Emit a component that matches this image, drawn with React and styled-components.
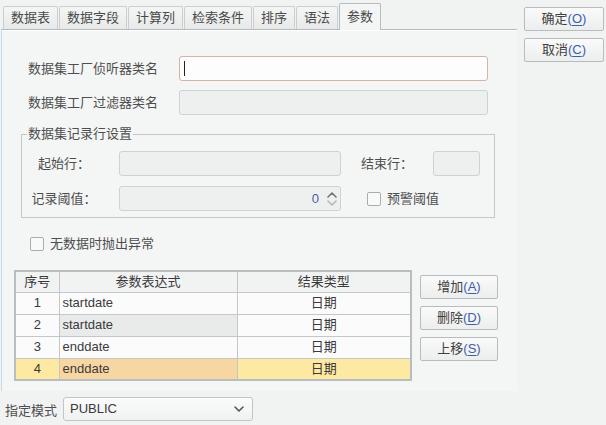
import React from 'react';
import styled, { createGlobalStyle } from 'styled-components';

const GlobalStyle = createGlobalStyle`
  html, body {
    margin: 0;
    padding: 0;
    background: #f1f2f2;
  }
  body {
    font-family: "Liberation Sans", "Noto Sans CJK SC", sans-serif;
    font-size: 13px;
    color: #4e4e4e;
  }
  * {
    box-sizing: border-box;
  }
`;

const Window = styled.div`
  display: flex;
  width: 606px;
  height: 425px;
  overflow: hidden;
`;

const Main = styled.div`
  width: 517px;
  display: flex;
  flex-direction: column;
`;

const TabBar = styled.div`
  display: flex;
  align-items: flex-end;
  height: 29px;
  padding-left: 3px;
`;

const Tab = styled.div`
  position: relative;
  z-index: ${(p) => (p.$active ? 1 : 0)};
  height: ${(p) => (p.$active ? '27px' : '23px')};
  margin-right: 1px;
  margin-bottom: ${(p) => (p.$active ? '-1px' : '0')};
  padding: 0 7px;
  display: flex;
  align-items: center;
  border: 1px solid ${(p) => (p.$active ? '#b9bcbe' : '#cbcecf')};
  border-bottom: none;
  border-radius: 2px 2px 0 0;
  background: ${(p) => (p.$active ? '#f4f5f5' : 'linear-gradient(#f4f5f5, #e8eaea)')};
  line-height: 16px;
  color: #4a4a4a;
`;

const Panel = styled.div`
  margin-left: 1px;
  height: 362px;
  border-top: 1px solid #b6b9bb;
  border-left: 1px solid #c3dbef;
  box-shadow: inset 0 1px 0 #ffffff;
  background: #f4f5f5;
  display: flex;
  flex-direction: column;
`;

const FieldRow = styled.div`
  display: flex;
  align-items: center;
  height: 25px;
  padding-left: 26px;
  margin-top: ${(p) => p.$top}px;
`;

const FieldLabel = styled.span`
  width: 151px;
  line-height: 16px;
`;

const TextBox = styled.div`
  width: ${(p) => p.$w}px;
  height: 25px;
  border: 1px solid ${(p) => (p.$focus ? '#d6b3a4' : '#cfd2d3')};
  border-radius: 3px;
  background: ${(p) => (p.$focus ? '#fdfdfd' : '#eef0f0')};
  display: flex;
  align-items: center;
  padding: 0 4px;
`;

const Caret = styled.span`
  width: 1px;
  height: 15px;
  background: #222;
`;

const Group = styled.fieldset`
  margin: 11px 0 0 19px;
  width: 474px;
  padding: 9px 0 6px 0;
  border: 1px solid #c4c7c9;
  border-radius: 0;
`;

const Legend = styled.legend`
  margin-left: 5px;
  padding: 0 1px;
  line-height: 16px;
`;

const GroupRow = styled.div`
  display: flex;
  align-items: center;
  height: 25px;
  margin-top: ${(p) => p.$top || 0}px;
`;

const CellLabel = styled.span`
  width: ${(p) => p.$w}px;
  margin-left: ${(p) => p.$ml || 0}px;
  margin-right: ${(p) => p.$mr || 0}px;
  text-align: ${(p) => p.$align || 'left'};
  line-height: 16px;
`;

const Spinner = styled(TextBox)`
  justify-content: flex-end;
  padding-right: 3px;
`;

const SpinValue = styled.span`
  color: #4a5ea6;
  margin-right: 8px;
  line-height: 16px;
`;

const SpinArrows = styled.div`
  display: flex;
  flex-direction: column;
  gap: 2px;
`;

const CheckBox = styled.span`
  width: 14px;
  height: 14px;
  border: 1px solid #a9adb0;
  border-radius: 2px;
  background: #f8f9f9;
  flex: none;
`;

const CheckItem = styled.label`
  display: flex;
  align-items: center;
  gap: 6px;
  margin-left: ${(p) => p.$ml || 0}px;
  line-height: 16px;
`;

const CheckRow = styled.div`
  margin-top: 19px;
  padding-left: 28px;
  height: 14px;
  display: flex;
  align-items: center;
`;

const TableArea = styled.div`
  display: flex;
  margin-top: 19px;
  padding-left: 12px;
`;

const Grid = styled.table`
  width: 396px;
  border-collapse: collapse;
  border: 2px solid #b9bdc0;
  table-layout: fixed;
  color: #3a3a3a;
`;

const HeadCell = styled.th`
  height: 21px;
  padding: 0;
  font-weight: normal;
  background: #f1f2f2;
  border: 1px solid #c3c7c9;
  line-height: 16px;
`;

const Cell = styled.td`
  height: 22px;
  padding: 0;
  padding-left: ${(p) => (p.$align === 'left' ? '3px' : '0')};
  text-align: ${(p) => p.$align || 'center'};
  background: ${(p) => p.$bg || '#fbfbfb'};
  border: 1px solid #c3c7c9;
  line-height: 16px;
`;

const SideButtons = styled.div`
  display: flex;
  flex-direction: column;
  gap: 7px;
  margin-left: 8px;
  padding-top: 5px;
`;

const Button = styled.button`
  width: ${(p) => p.$w}px;
  height: 24px;
  padding: 0;
  border: 1px solid #b9bcbe;
  border-radius: 2px;
  background: linear-gradient(#fafafa, #eceded);
  font-family: inherit;
  font-size: 13px;
  color: #404040;
  line-height: 16px;
`;

const Key = styled.span`
  color: #3d5ea8;
  u {
    text-underline-offset: 2px;
  }
`;

const ModeRow = styled.div`
  display: flex;
  align-items: center;
  margin-top: 6px;
  padding-left: 5px;
  gap: 6px;
`;

const Select = styled.div`
  width: 190px;
  height: 24px;
  border: 1px solid #c2c5c7;
  border-radius: 3px;
  background: linear-gradient(#fbfbfb, #f0f1f1);
  display: flex;
  align-items: center;
  justify-content: space-between;
  padding: 0 8px 0 6px;
  color: #3a3a3a;
  line-height: 16px;
`;

const Side = styled.div`
  display: flex;
  flex-direction: column;
  gap: 7px;
  margin-left: 7px;
  padding-top: 7px;
`;

const Chevron = ({ down, color = '#6f7376' }) => (
  <svg width="10" height="6" viewBox="0 0 10 6">
    <path
      d={down ? 'M1 1 L5 5 L9 1' : 'M1 5 L5 1 L9 5'}
      fill="none"
      stroke={color}
      strokeWidth="1.6"
      strokeLinecap="round"
      strokeLinejoin="round"
    />
  </svg>
);

const Mnemonic = ({ text, k }) => (
  <>
    {text}
    <Key>
      (<u>{k}</u>)
    </Key>
  </>
);

const tabs = ['数据表', '数据字段', '计算列', '检索条件', '排序', '语法', '参数'];

const rows = [
  { no: 1, expr: 'startdate', type: '日期' },
  { no: 2, expr: 'startdate', type: '日期', hover: true },
  { no: 3, expr: 'enddate', type: '日期' },
  { no: 4, expr: 'enddate', type: '日期', selected: true },
];

const App = () => {
  return (
    <>
      <GlobalStyle />
      <Window>
        <Main>
          <TabBar>
            {tabs.map((t) => (
              <Tab key={t} $active={t === '参数'}>
                {t}
              </Tab>
            ))}
          </TabBar>
          <Panel>
            <FieldRow $top={26}>
              <FieldLabel>数据集工厂侦听器类名</FieldLabel>
              <TextBox $w={309} $focus>
                <Caret />
              </TextBox>
            </FieldRow>
            <FieldRow $top={9}>
              <FieldLabel>数据集工厂过滤器类名</FieldLabel>
              <TextBox $w={309} />
            </FieldRow>

            <Group>
              <Legend>数据集记录行设置</Legend>
              <GroupRow>
                <CellLabel $w={84} $mr={13} $align="center">起始行：</CellLabel>
                <TextBox $w={222} />
                <CellLabel $w={72} $ml={20}>结束行：</CellLabel>
                <TextBox $w={47} />
              </GroupRow>
              <GroupRow $top={10}>
                <CellLabel $w={84} $mr={13} $align="center">记录阈值：</CellLabel>
                <Spinner $w={222}>
                  <SpinValue>0</SpinValue>
                  <SpinArrows>
                    <Chevron color="#707477" />
                    <Chevron down color="#b4b8ba" />
                  </SpinArrows>
                </Spinner>
                <CheckItem $ml={26}>
                  <CheckBox />
                  预警阈值
                </CheckItem>
              </GroupRow>
            </Group>

            <CheckRow>
              <CheckItem>
                <CheckBox />
                无数据时抛出异常
              </CheckItem>
            </CheckRow>

            <TableArea>
              <Grid>
                <colgroup>
                  <col style={{ width: 44 }} />
                  <col style={{ width: 178 }} />
                  <col style={{ width: 174 }} />
                </colgroup>
                <thead>
                  <tr>
                    <HeadCell>序号</HeadCell>
                    <HeadCell>参数表达式</HeadCell>
                    <HeadCell>结果类型</HeadCell>
                  </tr>
                </thead>
                <tbody>
                  {rows.map((r) => (
                    <tr key={r.no}>
                      <Cell $bg={r.selected ? '#fde9a1' : undefined}>{r.no}</Cell>
                      <Cell
                        $align="left"
                        $bg={r.selected ? '#f8d6a2' : r.hover ? '#e9eaea' : undefined}
                      >
                        {r.expr}
                      </Cell>
                      <Cell $bg={r.selected ? '#fde9a1' : undefined}>{r.type}</Cell>
                    </tr>
                  ))}
                </tbody>
              </Grid>
              <SideButtons>
                <Button $w={78}>
                  <Mnemonic text="增加" k="A" />
                </Button>
                <Button $w={78}>
                  <Mnemonic text="删除" k="D" />
                </Button>
                <Button $w={78}>
                  <Mnemonic text="上移" k="S" />
                </Button>
              </SideButtons>
            </TableArea>
          </Panel>

          <ModeRow>
            指定模式
            <Select>
              PUBLIC
              <Chevron down color="#555" />
            </Select>
          </ModeRow>
        </Main>

        <Side>
          <Button $w={80}>
            <Mnemonic text="确定" k="O" />
          </Button>
          <Button $w={80}>
            <Mnemonic text="取消" k="C" />
          </Button>
        </Side>
      </Window>
    </>
  );
};

export default App;
